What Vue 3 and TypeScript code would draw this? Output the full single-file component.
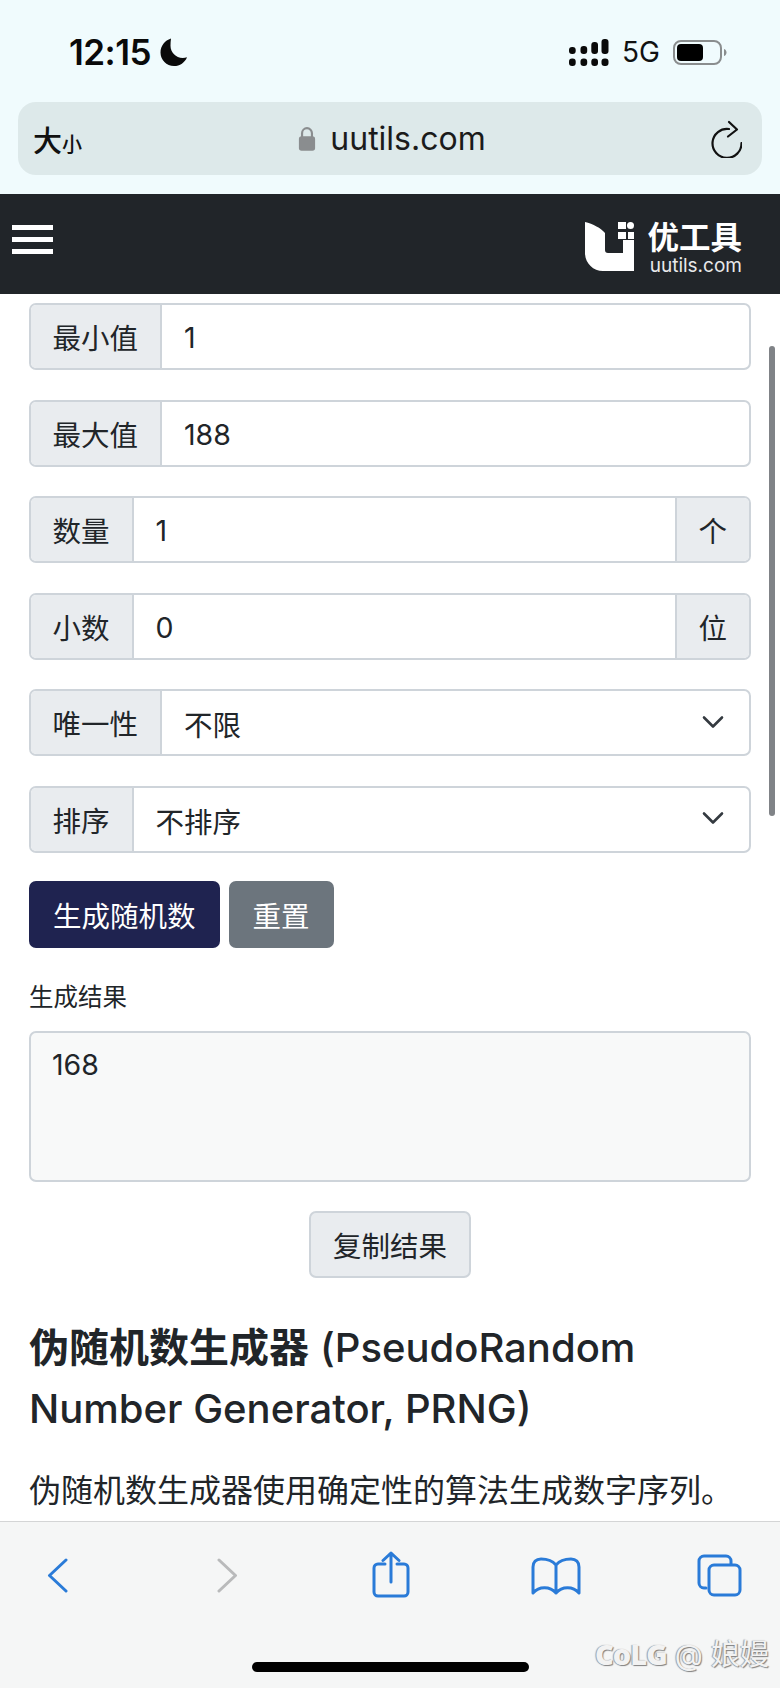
<script setup lang="ts">
interface Field {
  label: string
  value: string
  suffix?: string
  select?: boolean
}
const fields: Field[] = [
  { label: '最小值', value: '1' },
  { label: '最大值', value: '188' },
  { label: '数量', value: '1', suffix: '个' },
  { label: '小数', value: '0', suffix: '位' },
  { label: '唯一性', value: '不限', select: true },
  { label: '排序', value: '不排序', select: true },
]
</script>

<template>
  <div class="phone">
    <header class="chrome">
      <div class="status">
        <div class="time">
          <span>12:15</span>
          <svg class="moon" viewBox="0 0 28 28"><path d="M11 0.5C4.800 2.500 0.500 8 0.500 14.500 0.500 22 6.500 28 14 28c5.800 0 11-3.500 13-8.800-1.300.5-2.800.8-4.300.8-6.800 0-12.200-5.500-12.200-12.200 0-2.600.2-5 .5-7.300z" /></svg>
        </div>
        <div class="signal-group">
          <svg class="signal" viewBox="0 0 40 27"><rect x="0" y="8" width="6.700" height="7" rx="3" /><rect x="11.500" y="7" width="6.700" height="8" rx="3" /><rect x="22.300" y="3" width="6.700" height="12" rx="3" /><rect x="32.500" y="0" width="7" height="15" rx="3" /><rect x="0" y="19.500" width="6.700" height="7.500" rx="3" /><rect x="11.500" y="19.500" width="6.700" height="7.500" rx="3" /><rect x="22.300" y="19.500" width="6.700" height="7.500" rx="3" /><rect x="32.500" y="19.500" width="7" height="7.500" rx="3" /></svg>
          <span class="net">5G</span>
          <svg class="battery" viewBox="0 0 54 25"><rect x="1" y="1" width="47" height="23" rx="7" fill="none" stroke="#8a8d8e" stroke-width="2" /><rect x="4" y="4" width="26" height="17" rx="4" fill="#000" /><path d="M51 9c1.800.6 2.500 2 2.500 3.500s-.7 2.900-2.500 3.500z" fill="#8a8d8e" /></svg>
        </div>
      </div>
      <div class="address">
        <span class="aa">大<small>小</small></span>
        <span class="url">
          <svg class="lock" viewBox="0 0 20 28"><path d="M4.500 12V7.500a5.500 5.500 0 0 1 11 0V12" fill="none" stroke="#8a8d8f" stroke-width="2.400" /><rect x="1" y="11" width="18" height="16" rx="3" fill="#8a8d8f" /></svg>
          uutils.com
        </span>
        <svg class="reload" viewBox="0 0 32 38"><path d="M19 9A14.500 14.500 0 1 0 31.500 23" fill="none" stroke="#111" stroke-width="2.200" stroke-linecap="round" /><path d="M19 2l8 7.500-9 7" fill="none" stroke="#111" stroke-width="2.200" stroke-linecap="round" stroke-linejoin="round" /></svg>
      </div>
    </header>

    <nav class="navbar">
      <div class="burger"><i></i><i></i><i></i></div>
      <div class="brand">
        <svg class="logo" viewBox="0 0 49 49">
          <path d="M0 0C8 2 16 6 20 11V28a3 3 0 0 0 3 3H38V18H49V49H18C8 49 0 41 0 31Z" fill="#fff" />
          <rect x="33" y="0" width="8" height="7" fill="#fff" /><circle cx="45.500" cy="3.500" r="3.500" fill="#fff" /><rect x="33" y="10" width="8" height="7" fill="#fff" /><rect x="43" y="10" width="6" height="7" fill="#fff" />
        </svg>
        <div class="brand-text">
          <strong>优工具</strong>
          <span>uutils.com</span>
        </div>
      </div>
    </nav>

    <main class="page">
      <form class="form" @submit.prevent>
        <div v-for="f in fields" :key="f.label" class="group">
          <span class="addon">{{ f.label }}</span>
          <span class="control">{{ f.value }}
            <svg v-if="f.select" class="chev" viewBox="0 0 22 14"><path d="M2 2.500l9 9 9-9" fill="none" stroke="#343a40" stroke-width="2.600" stroke-linecap="round" stroke-linejoin="round" /></svg>
          </span>
          <span v-if="f.suffix" class="addon addon-end">{{ f.suffix }}</span>
        </div>
        <div class="actions">
          <button class="btn primary" type="button">生成随机数</button>
          <button class="btn secondary" type="button">重置</button>
        </div>
        <label class="result-label">生成结果</label>
        <div class="result">168</div>
        <div class="copy-row"><button class="btn light" type="button">复制结果</button></div>
      </form>
      <h2>
        <span class="line"><b>伪随机数生成器</b><span class="latin">(PseudoRandom</span></span>
        <span class="line">Number Generator, PRNG)</span>
      </h2>
      <p>伪随机数生成器使用确定性的算法生成数字序列。</p>
      <div class="scrollbar"></div>
    </main>

    <footer class="toolbar">
      <div class="tools">
        <svg class="t back" viewBox="0 0 21 35"><path d="M19 2L2.500 17.500 19 33" /></svg>
        <svg class="t fwd" viewBox="0 0 21 35"><path d="M2 2l16.500 15.500L2 33" /></svg>
        <svg class="t share" viewBox="0 0 38 47"><path d="M13 13H6a4 4 0 0 0-4 4V41a4 4 0 0 0 4 4H32a4 4 0 0 0 4-4V17a4 4 0 0 0-4-4H25M19 31V2M11 9.500L19 2l8 7.500" /></svg>
        <svg class="t book" viewBox="0 0 50 38"><path d="M25 8C21 3 15 2 10 2 5 2 2 5 2 10V36C8 29 19 29 25 36 31 29 42 29 48 36V10C48 5 45 2 40 2 35 2 29 3 25 8V36" /></svg>
        <svg class="t tabs" viewBox="0 0 45 43"><path d="M9 34H7a5 5 0 0 1-5-5V7a5 5 0 0 1 5-5H29a5 5 0 0 1 5 5V10" /><rect x="12" y="11" width="31" height="30" rx="5" /></svg>
      </div>
      <div class="home"></div>
      <div class="mark"><b>CoLG</b> @ 娘嫚</div>
    </footer>
  </div>
</template>

<style scoped>
.phone {
  width: 780px;
  height: 1688px;
  display: flex;
  flex-direction: column;
  overflow: hidden;
  background: #fff;
  color: #212529;
  font-family: Inter, "Noto Sans CJK SC", sans-serif;
}
.chrome {
  height: 194px;
  background: #f0fbfd;
  padding: 0 18px;
  box-sizing: border-box;
}
.status {
  height: 102px;
  display: flex;
  justify-content: space-between;
  align-items: flex-start;
  padding: 34px 35px 0 51px;
  box-sizing: border-box;
}
.time {
  display: flex;
  align-items: center;
  gap: 9px;
  font-size: 35px;
  font-weight: 600;
  line-height: 36px;
  color: #0a0a0a;
  letter-spacing: -0.5px;
}
.moon { width: 28px; height: 28px; fill: #0a0a0a; }
.signal-group { display: flex; align-items: center; gap: 13px; height: 36px; }
.signal { width: 40px; height: 27px; fill: #0a0a0a; }
.net { font-size: 28px; font-weight: 400; color: #111; }
.battery { width: 54px; height: 25px; }
.address {
  height: 73px;
  background: #dde9ea;
  border-radius: 18px;
  display: grid;
  grid-template-columns: 1fr auto 1fr;
  align-items: center;
  padding: 0 20px 0 15px;
}
.aa { font-size: 29px; font-weight: 500; color: #111; }
.aa small { font-size: 20px; }
.url {
  display: flex;
  align-items: center;
  gap: 14px;
  margin-left: 9px;
  font-size: 32px;
  line-height: 44px;
  color: #1b1b1b;
}
.lock { width: 18px; height: 26px; }
.reload { width: 32px; height: 38px; justify-self: end; }
.navbar {
  height: 100px;
  background: #212529;
  display: flex;
  justify-content: space-between;
  align-items: center;
  padding: 0 38px 0 12px;
  flex: none;
}
.burger { display: flex; flex-direction: column; gap: 7px; margin-top: -9px; }
.burger i { display: block; width: 41px; height: 5px; background: #fff; }
.brand { display: flex; align-items: center; gap: 13px; color: #fff; margin-top: 10px; }
.logo { width: 49px; height: 49px; margin-top: -5px; }
.brand-text { display: flex; flex-direction: column; align-items: flex-end; }
.brand-text strong { font-size: 31.500px; line-height: 34px; font-weight: 700; }
.brand-text span { font-size: 19px; line-height: 22px; color: #e8e9ea; }
.page {
  flex: 1;
  position: relative;
  overflow: hidden;
  padding: 9px 29px 0;
  min-height: 0;
}
.form { display: flex; flex-direction: column; }
.group {
  height: 67px;
  display: flex;
  margin-bottom: 29.500px;
  border: 2px solid #ced4da;
  border-radius: 7px;
  box-sizing: border-box;
  font-size: 28.500px;
  overflow: hidden;
}
.addon {
  background: #e9ecef;
  padding: 0 22px 0 21.500px;
  display: flex;
  align-items: center;
  border-right: 2px solid #ced4da;
  flex: none;
}
.addon-end { border-right: 0; border-left: 2px solid #ced4da; }
.control {
  flex: 1;
  display: flex;
  align-items: center;
  justify-content: space-between;
  padding: 2px 21px 0 22px;
}
.chev { width: 22px; height: 14px; margin-right: 4px; margin-top: -4px; }
.actions { display: flex; gap: 9px; margin-top: -1px; }
.btn {
  height: 67px;
  border-radius: 7px;
  border: 2px solid transparent;
  padding: 0 22px;
  font: inherit;
  font-size: 28.500px;
}
.primary { background: #1f2350; color: #fff; }
.secondary { background: #6c757d; color: #fff; }
.light { background: #e9ecef; border-color: #ced4da; color: #212529; }
.result-label { font-size: 24.500px; line-height: 36px; margin-top: 31px; }
.result {
  height: 151px;
  margin-top: 16px;
  border: 2px solid #ced4da;
  border-radius: 7px;
  background: #f8f9f9;
  box-sizing: border-box;
  padding: 12px 21px;
  font-size: 28.500px;
  line-height: 40px;
}
.copy-row { display: flex; justify-content: center; margin-top: 29px; }
h2 {
  margin: 40px 0 0;
  font-size: 40px;
  line-height: 60.500px;
  font-weight: 500;
}
h2 b { font-weight: 700; }
.line { display: block; white-space: nowrap; }
.latin { margin-left: 11px; }
p { margin: 28px 0 0; font-size: 32px; line-height: 48px; white-space: nowrap; }
.scrollbar {
  position: absolute;
  top: 52px;
  right: 5px;
  width: 6px;
  height: 470px;
  border-radius: 3px;
  background: #808387;
}
.toolbar {
  height: 167px;
  flex: none;
  background: #f5f6f6;
  border-top: 1px solid #d4d5d6;
  box-sizing: border-box;
  position: relative;
}
.tools {
  display: flex;
  align-items: flex-start;
  padding-left: 47px;
}
.t { fill: none; stroke: #2a7bd8; stroke-width: 3; stroke-linecap: round; stroke-linejoin: round; flex: none; }
.back { width: 21px; height: 35px; margin-top: 36px; }
.fwd { width: 21px; height: 35px; margin: 36px 0 0 149px; stroke: #b9babb; }
.share { width: 38px; height: 47px; margin: 29px 0 0 134px; }
.book { width: 50px; height: 38px; margin: 35px 0 0 121px; }
.tabs { width: 45px; height: 43px; margin: 32px 0 0 116px; }
.home {
  position: absolute;
  left: 252px;
  top: 140px;
  width: 277px;
  height: 10px;
  border-radius: 5px;
  background: #000;
}
.mark {
  position: absolute;
  right: 11px;
  top: 112px;
  font-size: 29px;
  line-height: 40px;
  color: #f2f2f2;
  text-shadow: 1px 1px 1px #808080, -1px 0 1px #999;
  white-space: nowrap;
}
.mark b { font-family: "Open Sans", sans-serif; font-weight: 800; font-size: 29px; letter-spacing: -1px; }
</style>
